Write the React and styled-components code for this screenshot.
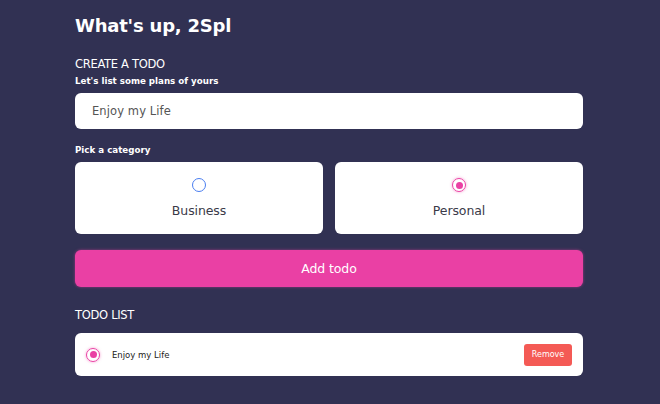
import React, { useState } from 'react'
import styled, { createGlobalStyle } from 'styled-components'

const GlobalStyle = createGlobalStyle`
  html, body {
    margin: 0;
    padding: 0;
    background: #313153;
  }
  body {
    font-family: 'DejaVu Sans', 'Open Sans', sans-serif;
    color: #ffffff;
  }
`

const Page = styled.main`
  width: 508px;
  margin: 0 0 0 75px;
  padding-top: 15px;
  box-sizing: border-box;
`

const Title = styled.h1`
  margin: 0;
  font-size: 18px;
  font-weight: 700;
  letter-spacing: -0.2px;
  line-height: 22px;
`

const Section = styled.section`
  margin-top: ${p => p.mt || 0}px;
`

const SectionTitle = styled.h3`
  margin: 0;
  font-size: 11.5px;
  font-weight: 400;
  line-height: 14px;
  letter-spacing: -0.3px;
`

const Label = styled.h4`
  margin: ${p => p.mt || 0}px 0 6px;
  font-size: 8.7px;
  font-weight: 700;
  line-height: 11px;
`

const Input = styled.input`
  display: block;
  width: 100%;
  height: 36px;
  box-sizing: border-box;
  border: none;
  border-radius: 6px;
  background: #ffffff;
  padding: 0 17px;
  font-family: inherit;
  font-size: 11.5px;
  color: #555;
  outline: none;
  letter-spacing: 0.1px;
`

const Options = styled.div`
  display: grid;
  grid-template-columns: 1fr 1fr;
  gap: 12px;
`

const Option = styled.label`
  height: 72px;
  background: #ffffff;
  border-radius: 6px;
  display: flex;
  flex-direction: column;
  align-items: center;
  padding-top: 16px;
  box-sizing: border-box;
  cursor: pointer;
`

const Bubble = styled.span`
  width: 14px;
  height: 14px;
  box-sizing: border-box;
  border-radius: 50%;
  border: 1.5px solid ${p => p.color};
  display: flex;
  align-items: center;
  justify-content: center;
  box-shadow: ${p => p.checked ? `0 0 3px ${p.color}88` : 'none'};
  &::after {
    content: '';
    width: 7px;
    height: 7px;
    border-radius: 50%;
    background: ${p => p.checked ? p.color : 'transparent'};
  }
`

const OptionText = styled.span`
  margin-top: 11px;
  font-size: 12.5px;
  color: #3a3a48;
  font-weight: 400;
  letter-spacing: -0.1px;
`

const AddButton = styled.button`
  display: block;
  width: 100%;
  height: 37px;
  margin-top: 16px;
  border: none;
  border-radius: 6px;
  background: #ea40a4;
  box-shadow: 0 0 3px rgba(234, 64, 164, 0.6);
  color: #ffffff;
  font-family: inherit;
  font-size: 12.5px;
  letter-spacing: -0.1px;
  cursor: pointer;
`

const TodoItem = styled.div`
  display: flex;
  align-items: center;
  height: 43px;
  margin-top: 11px;
  padding: 0 11px 0 11px;
  background: #ffffff;
  border-radius: 6px;
  box-sizing: border-box;
`

const TodoText = styled.span`
  flex: 1;
  margin-left: 12px;
  font-size: 8.5px;
  color: #222;
`

const RemoveButton = styled.button`
  height: 22px;
  width: 48px;
  padding: 0;
  border: none;
  border-radius: 3px;
  background: #f45a55;
  color: #ffffff;
  font-family: inherit;
  font-size: 8px;
  cursor: pointer;
`

const categories = [
  { id: 'business', name: 'Business', color: '#4a7ef0' },
  { id: 'personal', name: 'Personal', color: '#ea40a4' }
]

export default function App () {
  const [category, setCategory] = useState('personal')
  const [todos, setTodos] = useState([{ id: 1, text: 'Enjoy my Life', category: 'personal' }])

  return (
    <>
      <GlobalStyle />
      <Page>
        <Title>What's up, 2Spl</Title>

        <Section mt={20}>
          <SectionTitle>CREATE A TODO</SectionTitle>
          <Label mt={5}>Let's list some plans of yours</Label>
          <Input defaultValue='Enjoy my Life' />

          <Label mt={16}>Pick a category</Label>
          <Options>
            {categories.map(c => (
              <Option key={c.id} onClick={() => setCategory(c.id)}>
                <Bubble color={c.color} checked={category === c.id} />
                <OptionText>{c.name}</OptionText>
              </Option>
            ))}
          </Options>

          <AddButton>Add todo</AddButton>
        </Section>

        <Section mt={21}>
          <SectionTitle>TODO LIST</SectionTitle>
          {todos.map(t => (
            <TodoItem key={t.id}>
              <Bubble color='#ea40a4' checked />
              <TodoText>{t.text}</TodoText>
              <RemoveButton onClick={() => setTodos(todos.filter(x => x.id !== t.id))}>Remove</RemoveButton>
            </TodoItem>
          ))}
        </Section>
      </Page>
    </>
  )
}
